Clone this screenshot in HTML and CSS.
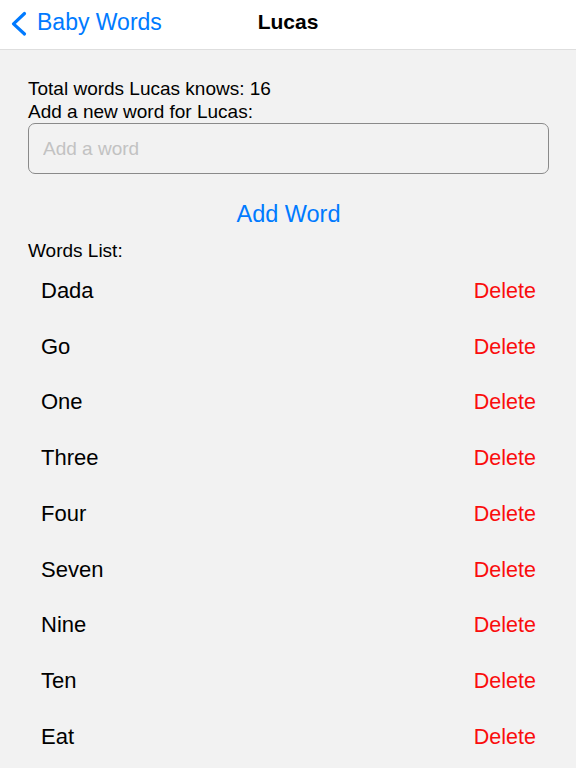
FILE: index.html
```html
<!DOCTYPE html>
<html lang="en">
<head>
<meta charset="utf-8">
<title>Lucas</title>
<link rel="stylesheet" href="styles.css">
</head>
<body>
<header class="navbar">
  <a class="back" href="#">
    <svg class="chevron" width="18" height="28" viewBox="0 0 18 28" aria-hidden="true">
      <path d="M14.5 3.5 L3.5 13.8 L14.5 24" fill="none" stroke="#007aff" stroke-width="3.2" stroke-linecap="round" stroke-linejoin="round"/>
    </svg>
    <span class="back-label">Baby Words</span>
  </a>
  <h1 class="title">Lucas</h1>
  <div class="spacer"></div>
</header>
<main class="content">
  <p class="info">Total words Lucas knows: 16</p>
  <p class="info">Add a new word for Lucas:</p>
  <input class="word-input" type="text" placeholder="Add a word">
  <button class="add-btn" type="button">Add Word</button>
  <p class="info list-label">Words List:</p>
  <ul class="words">
    <li class="row"><span class="word">Dada</span><button class="delete" type="button">Delete</button></li>
    <li class="row"><span class="word">Go</span><button class="delete" type="button">Delete</button></li>
    <li class="row"><span class="word">One</span><button class="delete" type="button">Delete</button></li>
    <li class="row"><span class="word">Three</span><button class="delete" type="button">Delete</button></li>
    <li class="row"><span class="word">Four</span><button class="delete" type="button">Delete</button></li>
    <li class="row"><span class="word">Seven</span><button class="delete" type="button">Delete</button></li>
    <li class="row"><span class="word">Nine</span><button class="delete" type="button">Delete</button></li>
    <li class="row"><span class="word">Ten</span><button class="delete" type="button">Delete</button></li>
    <li class="row"><span class="word">Eat</span><button class="delete" type="button">Delete</button></li>
  </ul>
</main>
</body>
</html>
```
FILE: styles.css
```css
* {
  box-sizing: border-box;
}

html, body {
  margin: 0;
  padding: 0;
  height: 100%;
  overflow: hidden;
}

body {
  background: #f2f2f2;
  font-family: "Liberation Sans", Arial, sans-serif;
  color: #000;
}

.navbar {
  height: 50px;
  background: #fff;
  border-bottom: 1px solid #dedede;
  display: grid;
  grid-template-columns: 1fr auto 1fr;
  align-items: center;
  padding: 0 10px;
}

.back {
  display: flex;
  align-items: center;
  gap: 9px;
  color: #007aff;
  text-decoration: none;
  font-size: 23px;
  margin-top: -4px;
}

.chevron {
  display: block;
  flex: none;
  margin-top: 2px;
}

.title {
  margin: -5px 0 0;
  font-size: 21px;
  font-weight: bold;
  text-align: center;
}

.content {
  padding: 27px 27px 0 28px;
  display: flex;
  flex-direction: column;
}

.info {
  margin: 0;
  font-size: 19px;
  line-height: 23px;
}

.word-input {
  display: block;
  width: 100%;
  height: 51px;
  margin: 0;
  padding: 0 14px;
  border: 1px solid #8a8a8a;
  border-radius: 7px;
  background: #f2f2f2;
  font-family: inherit;
  font-size: 19px;
  color: #000;
  outline: none;
}

.word-input::placeholder {
  color: #c2c2c2;
}

.add-btn {
  margin: 25px 0 0;
  padding: 0;
  border: 0;
  background: none;
  font-family: inherit;
  font-size: 23.5px;
  line-height: 30px;
  color: #007aff;
  text-align: center;
}

.list-label {
  margin-top: 10px;
}

.words {
  list-style: none;
  margin: 1px 0 0;
  padding: 0;
}

.row {
  height: 55.75px;
  display: flex;
  align-items: center;
  justify-content: space-between;
  padding: 0 13px;
}

.word {
  font-size: 22px;
}

.delete {
  padding: 1px 0 0;
  border: 0;
  background: none;
  font-family: inherit;
  font-size: 21.5px;
  color: #fa0d0d;
}
```
